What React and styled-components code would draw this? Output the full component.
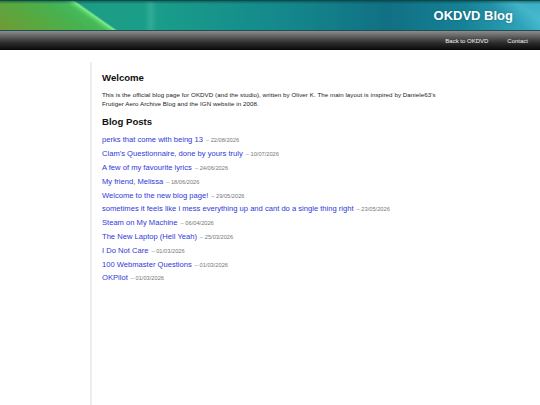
import styled, { createGlobalStyle } from "styled-components";

const GlobalStyle = createGlobalStyle`
  html, body {
    margin: 0;
    padding: 0;
    background: #ffffff;
    font-family: "Liberation Sans", Arial, sans-serif;
  }
`;

const Header = styled.header`
  height: 30px;
  display: flex;
  align-items: center;
  justify-content: flex-end;
  padding-right: 27px;
  border-top: 1px solid #0d4a4a;
  box-sizing: border-box;
  background:
    linear-gradient(180deg, rgba(0, 50, 50, 0.45) 0, rgba(0, 0, 0, 0) 3px),
    linear-gradient(35deg, rgba(0, 0, 0, 0) 60px, rgba(120, 240, 120, 0.35) 63px, rgba(150, 250, 140, 0.85) 65.5px, rgba(0, 0, 0, 0) 67.5px),
    linear-gradient(35deg, rgba(0, 0, 0, 0) 302px, rgba(110, 220, 235, 0.3) 318px, rgba(0, 0, 0, 0) 334px),
    linear-gradient(90deg, rgba(0, 0, 0, 0) 144px, rgba(150, 230, 210, 0.18) 151px, rgba(0, 0, 0, 0) 157px),
    linear-gradient(35deg, #6f9a36 0, #58a940 28px, #46b252 50px, #45bc5c 63px, rgba(40, 170, 120, 0) 66px),
    linear-gradient(90deg, #1f9a7c 0%, #1a9e8a 28%, #14898c 52%, #117084 72%, #168296 86%, #37acc4 100%);
`;

const SiteTitle = styled.h1`
  margin: 0;
  font-size: 13px;
  font-weight: bold;
  color: #ffffff;
  text-shadow: 0 0 2px rgba(0, 40, 60, 0.4);
`;

const NavBar = styled.nav`
  height: 19px;
  display: flex;
  align-items: center;
  justify-content: flex-end;
  gap: 19px;
  padding-right: 12px;
  border-top: 1px solid #1e4f52;
  background: linear-gradient(180deg, #8c8c8c 0%, #5e5e5e 30%, #2c2c2c 62%, #080808 100%);
`;

const NavLink = styled.a`
  font-size: 6px;
  color: #f2f2f2;
  text-decoration: none;
`;

const Main = styled.main`
  width: 360px;
  margin: 12px auto 0;
  padding: 10px 10px 0;
  box-sizing: border-box;
  border-left: 2px solid #ededed;
  min-height: calc(100vh - 62px);
`;

const Heading = styled.h2`
  margin: 0;
  font-size: 9.6px;
  line-height: 12px;
  font-weight: bold;
  color: #111111;
`;

const Intro = styled.p`
  margin: 5.5px 0 8.5px;
  font-size: 6.2px;
  letter-spacing: 0.06px;
  line-height: 9px;
  color: #222222;
`;

const PostList = styled.ul`
  list-style: none;
  margin: 5.4px 0 0;
  padding: 0;
`;

const PostItem = styled.li`
  display: flex;
  align-items: baseline;
  height: 13.8px;
  line-height: 13.8px;
  white-space: nowrap;
`;

const PostLink = styled.a`
  font-size: 7.6px;
  color: #2f38d8;
  text-decoration: none;
`;

const PostDate = styled.span`
  font-size: 5.7px;
  color: #777777;
  margin-left: 3px;
`;

const posts = [
  ["perks that come with being 13", "22/08/2026"],
  ["Clam's Questionnaire, done by yours truly", "10/07/2026"],
  ["A few of my favourite lyrics", "24/06/2026"],
  ["My friend, Melissa", "18/06/2026"],
  ["Welcome to the new blog page!", "29/05/2026"],
  ["sometimes it feels like i mess everything up and cant do a single thing right", "23/05/2026"],
  ["Steam on My Machine", "06/04/2026"],
  ["The New Laptop (Hell Yeah)", "25/03/2026"],
  ["I Do Not Care", "01/03/2026"],
  ["100 Webmaster Questions", "01/03/2026"],
  ["OKPilot", "01/03/2026"],
];

const App = () => {
  return (
    <>
      <GlobalStyle />
      <Header>
        <SiteTitle>OKDVD Blog</SiteTitle>
      </Header>
      <NavBar>
        <NavLink href="#">Back to OKDVD</NavLink>
        <NavLink href="#">Contact</NavLink>
      </NavBar>
      <Main>
        <Heading>Welcome</Heading>
        <Intro>
          This is the official blog page for OKDVD (and the studio), written by Oliver K. The main
          layout is inspired by Daniele63's Frutiger Aero Archive Blog and the IGN website in 2008.
        </Intro>
        <Heading>Blog Posts</Heading>
        <PostList>
          {posts.map(([title, date]) => (
            <PostItem key={title}>
              <PostLink href="#">{title}</PostLink>
              <PostDate>– {date}</PostDate>
            </PostItem>
          ))}
        </PostList>
      </Main>
    </>
  );
};

export default App;
